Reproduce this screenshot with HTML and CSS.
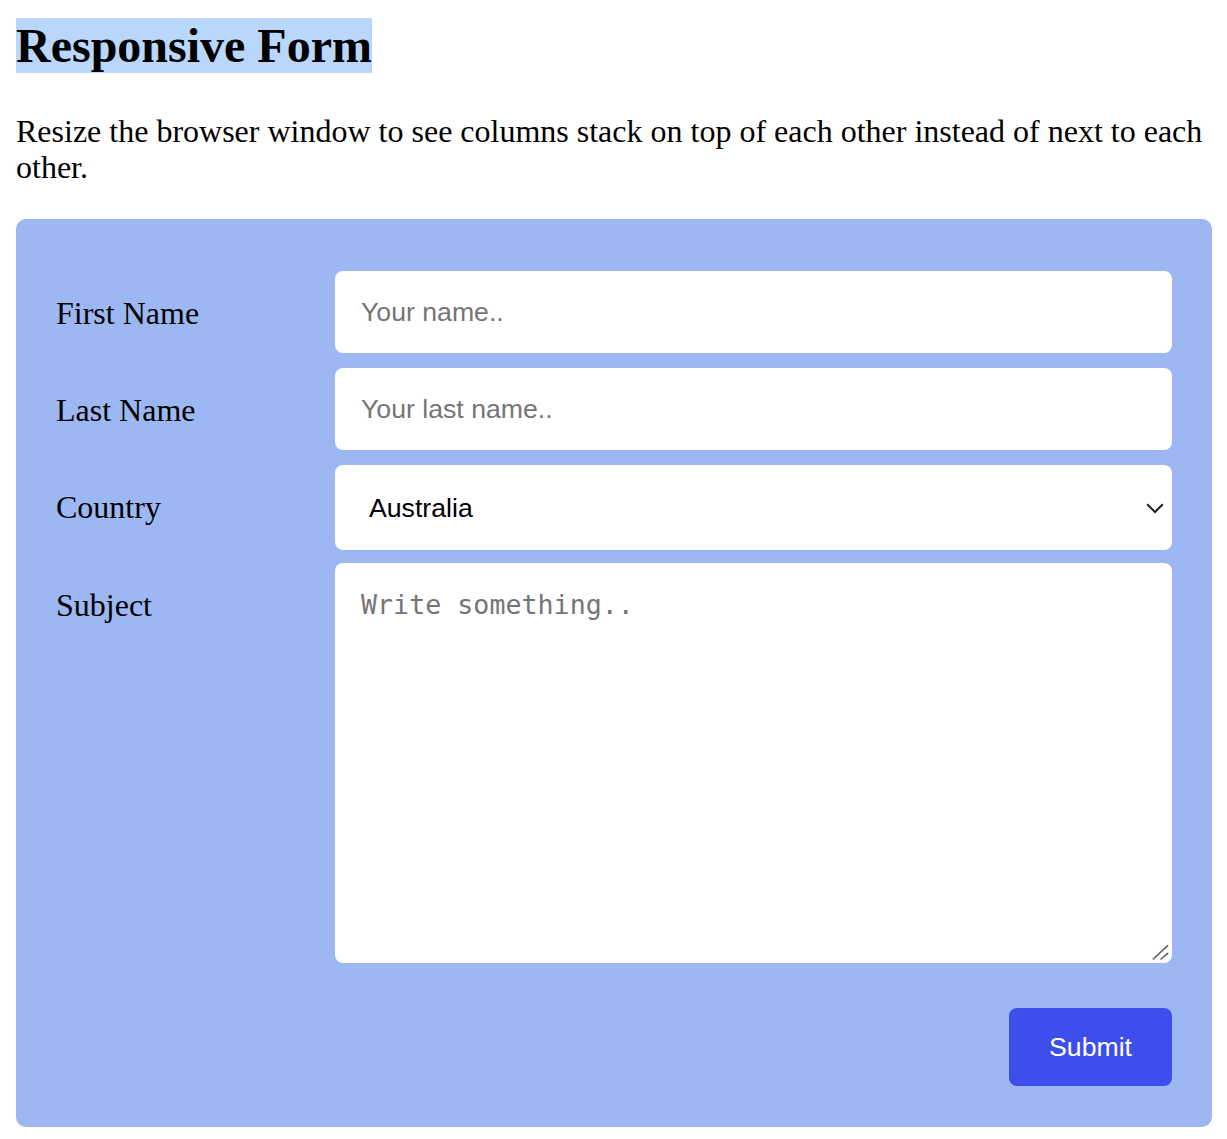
FILE: index.html
```html
<!DOCTYPE html>
<html lang="en">
<head>
<meta charset="utf-8">
<title>Responsive Form</title>
<link rel="stylesheet" href="styles.css">
</head>
<body>
<h1 class="title">Responsive Form</h1>
<p class="intro">Resize the browser window to see columns stack on top of each other instead of next to each other.</p>
<div class="container">
  <form class="form">
    <div class="row">
      <label class="col-25" for="fname">First Name</label>
      <div class="col-75"><input class="field" type="text" id="fname" placeholder="Your name.."></div>
    </div>
    <div class="row">
      <label class="col-25" for="lname">Last Name</label>
      <div class="col-75"><input class="field" type="text" id="lname" placeholder="Your last name.."></div>
    </div>
    <div class="row">
      <label class="col-25" for="country">Country</label>
      <div class="col-75">
        <div class="select-wrap">
          <select class="field select" id="country">
            <option>Australia</option>
            <option>Canada</option>
            <option>USA</option>
          </select>
          <svg class="chevron" width="18" height="11" viewBox="0 0 18 11" aria-hidden="true">
            <path d="M1.2 1.2 L9 9 L16.8 1.2" fill="none" stroke="#1e1e1e" stroke-width="2"/>
          </svg>
        </div>
      </div>
    </div>
    <div class="row row-subject">
      <label class="col-25" for="subject">Subject</label>
      <div class="col-75">
        <div class="area-wrap">
          <textarea class="field area" id="subject" placeholder="Write something.."></textarea>
          <svg class="grip" width="20" height="20" viewBox="0 0 20 20" aria-hidden="true">
            <path d="M1.3 16 L15.7 2.7 M9 16 L15.7 10.3" fill="none" stroke="#5f5f5f" stroke-width="1.6" stroke-linecap="round"/>
          </svg>
        </div>
      </div>
    </div>
    <div class="actions">
      <button class="submit" type="button">Submit</button>
    </div>
  </form>
</div>
</body>
</html>
```
FILE: styles.css
```css
html, body {
  background: #ffffff;
}
body {
  margin: 0 15px 0 16px;
  font-family: "Liberation Serif", "Times New Roman", serif;
  color: #000;
}
.title {
  display: inline-block;
  margin: 18px 0 0;
  font-size: 48px;
  font-weight: bold;
  line-height: 55px;
  background: #b9d6fb;
}
.intro {
  margin: 40px 0 34px;
  font-size: 32px;
  line-height: 36px;
}
.container {
  background: #9db7f3;
  border-radius: 10px;
  padding: 40px 40px 41px;
}
.form {
  display: flex;
  flex-direction: column;
}
.row {
  display: flex;
  align-items: flex-start;
  margin-top: 12px;
}
.row-subject {
  margin-top: 13px;
}
.col-25 {
  width: 25%;
  flex: none;
  box-sizing: border-box;
  padding: 24px 24px 24px 0;
  font-size: 32px;
  line-height: normal;
}
.col-75 {
  width: 75%;
  flex: none;
}
.field {
  display: block;
  width: 100%;
  box-sizing: border-box;
  border: none;
  border-radius: 8px;
  background: #fff;
  font-family: "Liberation Sans", Arial, sans-serif;
  font-size: 26.67px;
  color: #000;
  outline: none;
  margin: 0;
}
.field::placeholder {
  color: #757575;
}
input.field {
  height: 82px;
  padding: 0 26px;
}
.select-wrap,
.area-wrap {
  position: relative;
}
.select {
  -webkit-appearance: none;
  appearance: none;
  height: 85px;
  padding: 0 40px 0 34px;
}
.chevron {
  position: absolute;
  right: 8px;
  top: 38px;
  pointer-events: none;
}
.area {
  height: 400px;
  padding: 26px;
  font-family: "DejaVu Sans Mono", Menlo, monospace;
  font-size: 26.67px;
  resize: none;
}
.grip {
  position: absolute;
  right: 0;
  bottom: 0;
  pointer-events: none;
}
.actions {
  display: flex;
  justify-content: flex-end;
  margin-top: 45px;
}
.submit {
  height: 78px;
  padding: 0 40px;
  border: none;
  border-radius: 8px;
  background: #3d4eed;
  color: #fff;
  font-family: "Liberation Sans", Arial, sans-serif;
  font-size: 26.67px;
  cursor: pointer;
}
```
